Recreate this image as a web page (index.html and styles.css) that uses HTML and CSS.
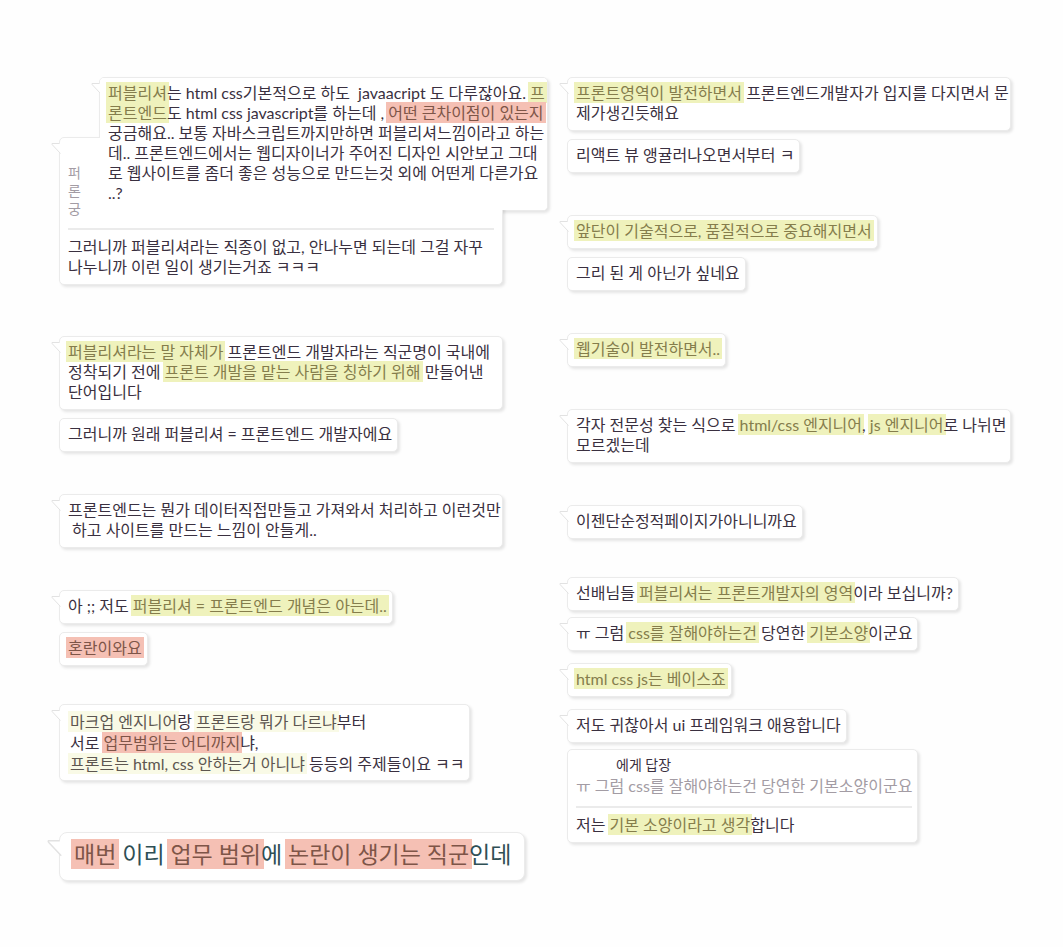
FILE: index.html
```html
<!DOCTYPE html>
<html lang="ko">
<head>
<meta charset="utf-8">
<meta name="viewport" content="width=device-width, initial-scale=1">
<title>퍼블리셔와 프론트엔드</title>
<link rel="stylesheet" href="styles.css">
</head>
<body>
<svg class="defs" aria-hidden="true">
  <symbol id="tail" viewBox="0 0 10 12">
    <path d="M10 0.5 L1 0.5 Q0.5 1 1.5 2 L8.5 9.5 L10 9.5 Z" fill="#fff"/>
    <path d="M8.5 0.5 L1 0.5 Q0.5 1 1.5 2 L9.5 10.5" fill="none" stroke="#e2e2e2"/>
  </symbol>
</svg>
<main class="board">
  <section class="column">
    <div class="thread">
      <article class="bubble bubble--inset">
        <svg class="tail" aria-hidden="true"><use href="#tail"/></svg>
        <p class="text"><mark>퍼블리셔</mark>는 html css기본적으로 하도&nbsp; javaacript 도 다루잖아요. <mark>프</mark><br><mark>론트엔드</mark>도 html css javascript를 하는데 , <mark class="red">어떤 큰차이점이 있는지</mark><br>궁금해요.. 보통 자바스크립트까지만하면 퍼블리셔느낌이라고 하는<br>데.. 프론트엔드에서는 웹디자이너가 주어진 디자인 시안보고 그대<br>로 웹사이트를 좀더 좋은 성능으로 만드는것 외에 어떤게 다른가요<br>..?</p>
      </article>
      <article class="bubble bubble--wide bubble--overlap">
        <svg class="tail" aria-hidden="true"><use href="#tail"/></svg>
        <blockquote class="quote quote--cut">퍼<br>론<br>궁</blockquote>
        <hr class="rule">
        <p class="text">그러니까 퍼블리셔라는 직종이 없고, 안나누면 되는데 그걸 자꾸<br>나누니까 이런 일이 생기는거죠 ㅋㅋㅋ</p>
      </article>
    </div>
    <div class="thread thread--far">
      <article class="bubble bubble--wide">
        <svg class="tail" aria-hidden="true"><use href="#tail"/></svg>
        <p class="text"><mark>퍼블리셔라는 말 자체가</mark> 프론트엔드 개발자라는 직군명이 국내에<br>정착되기 전에 <mark>프론트 개발을 맡는 사람을 칭하기 위해</mark> 만들어낸<br>단어입니다</p>
      </article>
      <article class="bubble">
        <p class="text">그러니까 원래 퍼블리셔 = 프론트엔드 개발자에요</p>
      </article>
    </div>
    <div class="thread">
      <article class="bubble bubble--wide">
        <svg class="tail" aria-hidden="true"><use href="#tail"/></svg>
        <p class="text">프론트엔드는 뭔가 데이터직접만들고 가져와서 처리하고 이런것만<br>&nbsp;하고 사이트를 만드는 느낌이 안들게..</p>
      </article>
    </div>
    <div class="thread">
      <article class="bubble">
        <svg class="tail" aria-hidden="true"><use href="#tail"/></svg>
        <p class="text">아 ;; 저도 <mark>퍼블리셔 = 프론트엔드 개념은 아는데..</mark></p>
      </article>
      <article class="bubble">
        <p class="text"><mark class="red">혼란이와요</mark></p>
      </article>
    </div>
    <div class="thread thread--near">
      <article class="bubble bubble--roomy">
        <svg class="tail" aria-hidden="true"><use href="#tail"/></svg>
        <p class="text"><mark class="pale">마크업 엔지니어</mark>랑 <mark class="pale">프론트랑 뭐가 다르냐</mark>부터<br>서로 <mark class="red">업무범위는 어디까지</mark>냐,<br><mark class="pale">프론트는 html, css 안하는거 아니냐</mark> 등등의 주제들이요 ㅋㅋ</p>
      </article>
    </div>
    <div class="thread thread--far">
      <article class="bubble bubble--large">
        <svg class="tail" aria-hidden="true"><use href="#tail"/></svg>
        <p class="text"><mark class="red">매번</mark> 이리 <mark class="red">업무 범위</mark>에 <mark class="red">논란이 생기는 직군</mark>인데</p>
      </article>
    </div>
  </section>

  <section class="column">
    <div class="thread">
      <article class="bubble bubble--wide">
        <svg class="tail" aria-hidden="true"><use href="#tail"/></svg>
        <p class="text"><mark>프론트영역이 발전하면서</mark> 프론트엔드개발자가 입지를 다지면서 문<br>제가생긴듯해요</p>
      </article>
      <article class="bubble">
        <p class="text">리액트 뷰 앵귤러나오면서부터 ㅋ</p>
      </article>
    </div>
    <div class="thread">
      <article class="bubble">
        <svg class="tail" aria-hidden="true"><use href="#tail"/></svg>
        <p class="text"><mark>앞단이 기술적으로, 품질적으로 중요해지면서</mark></p>
      </article>
      <article class="bubble">
        <p class="text">그리 된 게 아닌가 싶네요</p>
      </article>
    </div>
    <div class="thread">
      <article class="bubble">
        <svg class="tail" aria-hidden="true"><use href="#tail"/></svg>
        <p class="text"><mark>웹기술이 발전하면서..</mark></p>
      </article>
    </div>
    <div class="thread">
      <article class="bubble bubble--wide">
        <svg class="tail" aria-hidden="true"><use href="#tail"/></svg>
        <p class="text">각자 전문성 찾는 식으로 <mark>html/css 엔지니어</mark>, <mark>js 엔지니어</mark>로 나뉘면<br>모르겠는데</p>
      </article>
    </div>
    <div class="thread">
      <article class="bubble">
        <svg class="tail" aria-hidden="true"><use href="#tail"/></svg>
        <p class="text">이젠단순정적페이지가아니니까요</p>
      </article>
    </div>
    <div class="thread thread--near thread--close">
      <article class="bubble">
        <svg class="tail" aria-hidden="true"><use href="#tail"/></svg>
        <p class="text">선배님들 <mark>퍼블리셔는 프론트개발자의 영역</mark>이라 보십니까?</p>
      </article>
      <article class="bubble">
        <svg class="tail" aria-hidden="true"><use href="#tail"/></svg>
        <p class="text">ㅠ 그럼 <mark>css를 잘해야하는건</mark> 당연한 <mark>기본소양</mark>이군요</p>
      </article>
      <article class="bubble bubble--apart">
        <svg class="tail" aria-hidden="true"><use href="#tail"/></svg>
        <p class="text"><mark>html css js는 베이스죠</mark></p>
      </article>
      <article class="bubble bubble--apart">
        <svg class="tail" aria-hidden="true"><use href="#tail"/></svg>
        <p class="text">저도 귀찮아서 ui 프레임워크 애용합니다</p>
      </article>
      <article class="bubble">
        <p class="reply-to">에게 답장</p>
        <blockquote class="quote">ㅠ 그럼 css를 잘해야하는건 당연한 기본소양이군요</blockquote>
        <hr class="rule">
        <p class="text">저는 <mark>기본 소양이라고 생각</mark>합니다</p>
      </article>
    </div>
  </section>
</main>
</body>
</html>
```
FILE: styles.css
```css
* {
  box-sizing: border-box;
}

body {
  margin: 0;
  background: #fefefe;
  color: #3a3040;
  font-family: Lato, "Noto Sans CJK KR", sans-serif;
  font-size: 16px;
  line-height: 20px;
}

.defs {
  position: absolute;
  width: 0;
  height: 0;
}

.board {
  display: grid;
  grid-template-columns: minmax(0, 1fr) minmax(0, 1fr);
  column-gap: 59px;
  padding: 77px 47px 64px 59px;
}

.column {
  display: flex;
  flex-direction: column;
  gap: 42px;
}

.thread {
  display: flex;
  flex-direction: column;
  align-items: flex-start;
  gap: 8px;
}

.thread--far {
  margin-top: 9px;
}

.thread--near {
  margin-top: -4px;
}

.thread--close {
  gap: 6px;
}

.bubble {
  position: relative;
  padding: 5px 5px 7px 8px;
  border: 1px solid #ebebeb;
  border-radius: 5px;
  background: #fff;
  box-shadow: 2px 2px 3px rgba(0, 0, 0, 0.1);
  white-space: nowrap;
}

.bubble--wide {
  width: 444px;
}

/* The reply sits over this message's box but under its text. */
.bubble--inset {
  position: static;
  display: grid;
  margin-left: 40px;
  padding: 0;
}

.bubble--inset .tail {
  position: relative;
  grid-area: 1 / 1;
}

.bubble--inset .text {
  position: relative;
  z-index: 2;
  grid-area: 1 / 1;
  padding: 5px 2px 7px 8px;
  border-radius: 4px;
  background: #fff;
}

.bubble--overlap {
  z-index: 1;
  margin-top: -82px;
  padding-right: 8px;
}

.bubble--apart {
  margin-top: 6px;
}

.bubble--roomy {
  padding: 6px 5px 6px 10px;
  line-height: 21px;
}

.bubble--large {
  padding: 7px 13px 11px 14px;
  border-radius: 8px;
  color: #2f4f55;
  font-size: 23px;
  line-height: 29px;
}

.text {
  margin: 0;
}

.tail {
  position: absolute;
  top: 5px;
  left: -9px;
  width: 10px;
  height: 12px;
}

.bubble--large .tail {
  top: 7px;
  left: -13px;
  width: 15px;
  height: 18px;
}

mark {
  margin: 0 -2px;
  padding: 1px 2px;
  background: #eff2bc;
  color: #857d4c;
}

mark.red {
  background: #f5c0b4;
  color: #7e5548;
}

mark.pale {
  background: #f9fae6;
  color: #5d5650;
}

.bubble--large mark {
  margin: 0 -3px;
  padding: 1px 3px;
}

.quote {
  margin: 0;
  color: #a39ca4;
}

.quote--cut {
  margin-top: 21px;
  font-size: 14px;
  line-height: 18px;
}

.reply-to {
  margin: 0 0 1px;
  padding-left: 40px;
  font-size: 14px;
}

.rule {
  height: 2px;
  margin: 10px 0 7px;
  border: 0;
  background: #ebebeb;
}
```
